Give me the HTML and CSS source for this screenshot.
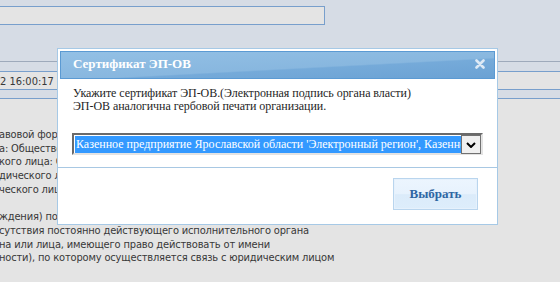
FILE: index.html
```html
<!DOCTYPE html>
<html lang="ru">
<head>
    <meta charset="UTF-8">
    <title>Сертификат ЭП-ОВ</title>
    <link rel="stylesheet" href="styles.css">
</head>
<body>

    <!-- страница под затемнением -->
    <div class="page">
        <div class="search-row">
            <div class="search"></div>
        </div>
        <div class="row row-top"></div>
        <div class="row row-date">2 16:00:17</div>
        <div class="row row-sub"></div>
        <div class="details">
            <p>авовой формы: Общество с ограниченной ответственностью</p>
            <p>а: Общество с ограниченной ответственностью</p>
            <p>кого лица: ООО</p>
            <p>дического лица</p>
            <p>ческого лица</p>
            <p>&nbsp;</p>
            <p>ждения) постоянно действующего исполнительного органа юридического лица (в случае</p>
            <p>сутствия постоянно действующего исполнительного органа</p>
            <p>на или лица, имеющего право действовать от имени</p>
            <p>ности), по которому осуществляется связь с юридическим лицом</p>
        </div>
    </div>

    <!-- окно выбора сертификата -->
    <div class="dialog">
        <div class="dialog-head">
            <span class="dialog-title">Сертификат ЭП-ОВ</span>
            <svg class="dialog-close" width="10" height="10" viewBox="0 0 10 10">
                <path d="M1.5 1.5 L8.5 8.5 M8.5 1.5 L1.5 8.5" stroke="#dde9f5" stroke-width="2.6" stroke-linecap="round"/>
            </svg>
        </div>
        <div class="dialog-body">
            <p>Укажите сертификат ЭП-ОВ.(Электронная подпись органа власти)</p>
            <p>ЭП-ОВ аналогична гербовой печати организации.</p>
            <div class="select">
                <div class="select-value">Казенное предприятие Ярославской области 'Электронный регион', Казенное предприятие Ярославской области</div>
                <div class="select-arrow">
                    <svg width="10" height="6" viewBox="0 0 10 6">
                        <polyline points="1,1 5,5 9,1" fill="none" stroke="#000" stroke-width="2"/>
                    </svg>
                </div>
            </div>
        </div>
        <div class="dialog-foot">
            <a class="btn" href="javascript:;">Выбрать</a>
        </div>
    </div>

</body>
</html>
```

FILE: styles.css
```css
*{
    padding: 0;
    margin: 0;
    box-sizing: border-box;
}
body{
    width: 560px;
    height: 282px;
    overflow: hidden;
    background-color: #d6dce5;
    font-family: "DejaVu Sans Condensed", "DejaVu Sans", sans-serif;
    font-size: 11px;
    color: #383838;
}
.page{
    height: 282px;
    display: flex;
    flex-direction: column;
}
/*  поле поиска сверху  */
.search-row{
    height: 61px;
    padding-top: 6px;
}
.search{
    width: 327px;
    height: 19px;
    margin-left: -2px;
    background-color: #e4e4e4;
    border: 1px solid #789fcc;
}
/*  строки таблицы  */
.row-top{
    height: 10px;
    border-top: 1px solid #9eaabb;
}
.row-date{
    height: 18px;
    border-top: 1px solid #789fcc;
    background-color: #e4e4e4;
    line-height: 17px;
    padding-top: 1px;
}
.row-sub{
    height: 10px;
    border-top: 1px solid #789fcc;
    border-bottom: 1px solid #789fcc;
}
.details{
    flex: 1;
    background-color: #e4e4e4;
    padding-top: 29px;
    line-height: 13.7px;
    white-space: nowrap;
    letter-spacing: -0.16px;
}
.details p{
    margin-left: -1px;
}

/*  окно  */
.dialog{
    position: absolute;
    left: 57px;
    top: 48px;
    width: 441px;
    height: 177px;
    background-color: #fff;
    border: 1px solid #a6c9e6;
    padding: 2px;
    font-family: "Liberation Serif", serif;
    font-size: 12px;
    color: #1e1e1e;
}
.dialog-head{
    height: 28px;
    border: 1px solid #5b9ad3;
    background: linear-gradient(177deg, #93c0e5 0%, #88b7df 58%, #75aad9 61%, #6ba2d4 100%);
    display: flex;
    align-items: center;
    padding: 0 9px 2px 12px;
}
.dialog-title{
    color: #fff;
    font-weight: bold;
    font-size: 13px;
}
.dialog-close{
    margin-left: auto;
}
.dialog-body{
    padding: 8px 0 0 12px;
    line-height: 13px;
}
.dialog-body p{
    padding-left: 1px;
    letter-spacing: -0.05px;
}
/*  выпадающий список  */
.select{
    margin-top: 20px;
    width: 411px;
    height: 22px;
    display: flex;
    border-style: solid;
    border-width: 2px;
    border-color: #6a6a6a #e3e3e3 #e3e3e3 #6a6a6a;
    padding: 1px 0 0 1px;
}
.select-value{
    flex: 1;
    background-color: #3399ff;
    color: #fff;
    white-space: nowrap;
    overflow: hidden;
    line-height: 17px;
    padding-left: 1px;
    height: 17px;
}
.select-arrow{
    width: 20px;
    height: 19px;
    margin-top: -1px;
    background-color: #f0f0f0;
    border: 1px solid #717171;
    display: flex;
    align-items: center;
    justify-content: center;
}
.dialog-foot{
    margin: 12px -2px 0;
    border-top: 1px solid #a8c8e3;
    padding: 10px 19px 0 0;
    display: flex;
    justify-content: flex-end;
}
.btn{
    width: 85px;
    height: 32px;
    border: 1px solid #b9d5ee;
    box-shadow: inset 0 0 0 1px #e6f1fc;
    background: linear-gradient(#ecf5fe 0%, #e7f2fd 50%, #dbebfa 52%, #ddedfb 100%);
    color: #2f66a3;
    font-weight: bold;
    font-size: 13px;
    text-decoration: none;
    display: flex;
    align-items: center;
    justify-content: center;
}
```
